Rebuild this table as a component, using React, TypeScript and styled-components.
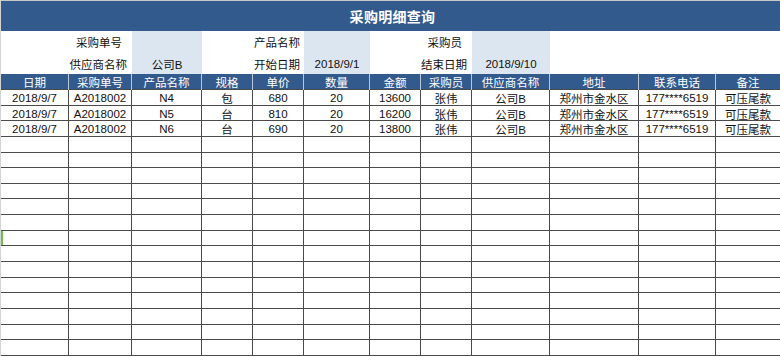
import React from "react";
import styled, { createGlobalStyle } from "styled-components";

const COLS = "68px 63px 70px 51px 51px 66px 51px 51px 78px 89px 77px 64px";
const FONT = `"Liberation Sans", "Noto Sans CJK SC", sans-serif`;

const Global = createGlobalStyle`
  html, body { margin: 0; padding: 0; background: #ffffff; }
  body { font-family: ${FONT}; width: 780px; height: 356px; overflow: hidden; }
  * { box-sizing: border-box; }
`;

const Sheet = styled.div`
  width: 780px;
  height: 356px;
  display: flex;
  flex-direction: column;
  border-left: 1px solid #d4d4d4;
  overflow: hidden;
`;

const Title = styled.div`
  height: 31px;
  border-top: 1px solid #c8c8c8;
  background: #335a8c;
  color: #ffffff;
  font-weight: bold;
  font-size: 14px;
  display: flex;
  align-items: center;
  justify-content: center;
  padding-left: 4px;
  letter-spacing: 0.3px;
`;

const Filters = styled.div`
  display: grid;
  grid-template-columns: ${COLS};
  grid-template-rows: 21px 22px;
  font-size: 11.5px;
  color: #111;
`;

const Label = styled.div<{ $span: number; $pad?: number }>`
  grid-column: span ${(p) => p.$span};
  display: flex;
  align-items: center;
  justify-content: flex-end;
  padding-right: ${(p) => p.$pad ?? 4}px;
  padding-top: 1px;
  white-space: nowrap;
`;

const Input = styled.div`
  background: #dce6f1;
  display: flex;
  align-items: center;
  justify-content: center;
  padding-top: 1px;
  white-space: nowrap;
`;

const Blank = styled.div<{ $span: number }>`
  grid-column: span ${(p) => p.$span};
`;

const Row = styled.div<{ $header?: boolean }>`
  display: grid;
  grid-template-columns: ${COLS};
  height: ${(p) => (p.$header ? "16px" : "15.65px")};
  flex: none;
  background: ${(p) => (p.$header ? "#335a8c" : "#ffffff")};
  color: ${(p) => (p.$header ? "#ffffff" : "#111111")};
  border-bottom: 1px solid #4a4a4a;
  font-size: 11.5px;
`;

const HeadCell = styled.div`
  display: flex;
  align-items: center;
  justify-content: center;
  white-space: nowrap;
  border-right: 1px solid #b9c7da;
  &:last-child { border-right: none; }
`;

const Cell = styled.div<{ $mark?: boolean }>`
  display: flex;
  align-items: center;
  justify-content: center;
  white-space: nowrap;
  border-right: 1px solid #4a4a4a;
  box-shadow: ${(p) => (p.$mark ? "inset 2px 0 0 #6cbf4a" : "none")};
  &:last-child { border-right: none; }
`;

const headers = ["日期", "采购单号", "产品名称", "规格", "单价", "数量", "金额", "采购员", "供应商名称", "地址", "联系电话", "备注"];

const data = [
  ["2018/9/7", "A2018002", "N4", "包", "680", "20", "13600", "张伟", "公司B", "郑州市金水区", "177****6519", "可压尾款"],
  ["2018/9/7", "A2018002", "N5", "台", "810", "20", "16200", "张伟", "公司B", "郑州市金水区", "177****6519", "可压尾款"],
  ["2018/9/7", "A2018002", "N6", "台", "690", "20", "13800", "张伟", "公司B", "郑州市金水区", "177****6519", "可压尾款"],
];

const rows: string[][] = [...data, ...Array.from({ length: 14 }, () => Array(12).fill(""))];

export default function App() {
  return (
    <>
      <Global />
      <Sheet>
        <Title>采购明细查询</Title>
        <Filters>
          <Label $span={2} $pad={10}>采购单号</Label>
          <Input />
          <Label $span={2}>产品名称</Label>
          <Input />
          <Label $span={2} $pad={10}>采购员</Label>
          <Input />
          <Blank $span={3} />
          <Label $span={2} $pad={5}>供应商名称</Label>
          <Input>公司B</Input>
          <Label $span={2}>开始日期</Label>
          <Input>2018/9/1</Input>
          <Label $span={2} $pad={5}>结束日期</Label>
          <Input>2018/9/10</Input>
          <Blank $span={3} />
        </Filters>
        <Row $header>
          {headers.map((h) => (
            <HeadCell key={h}>{h}</HeadCell>
          ))}
        </Row>
        {rows.map((r, i) => (
          <Row key={i}>
            {r.map((v, j) => (
              <Cell key={j} $mark={i === 9 && j === 0}>{v}</Cell>
            ))}
          </Row>
        ))}
      </Sheet>
    </>
  );
}
